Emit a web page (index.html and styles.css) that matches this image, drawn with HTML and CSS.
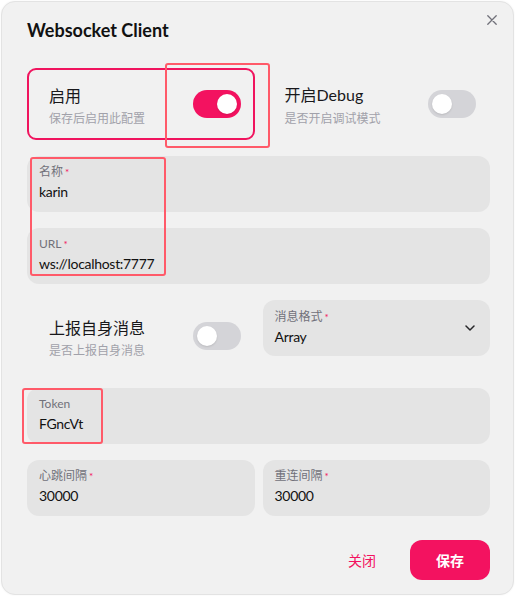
FILE: index.html
```html
<!DOCTYPE html>
<html lang="zh">
<head>
<meta charset="utf-8">
<title>Websocket Client</title>
<link rel="stylesheet" href="styles.css">
</head>
<body>
<div class="dialog">
  <button class="close" aria-label="close">
    <svg width="10" height="10" viewBox="0 0 10 10"><path d="M0.8 0.8 L9.2 9.2 M9.2 0.8 L0.8 9.2" stroke="#71717a" stroke-width="1.3" stroke-linecap="round" fill="none"/></svg>
  </button>
  <h1 class="title">Websocket Client</h1>
  <div class="body">
    <div class="grid2">
      <div class="switch-card selected">
        <div class="sc-text">
          <div class="sc-title">启用</div>
          <div class="sc-desc">保存后启用此配置</div>
        </div>
        <div class="switch on"><span class="knob"></span></div>
      </div>
      <div class="switch-card">
        <div class="sc-text">
          <div class="sc-title">开启<span class="lat">Debug</span></div>
          <div class="sc-desc">是否开启调试模式</div>
        </div>
        <div class="switch"><span class="knob"></span></div>
      </div>
    </div>

    <div class="field">
      <div class="label">名称<span class="req">*</span></div>
      <div class="value">karin</div>
    </div>
    <div class="field">
      <div class="label">URL<span class="req">*</span></div>
      <div class="value">ws://localhost:7777</div>
    </div>

    <div class="grid2 top">
      <div class="switch-card">
        <div class="sc-text">
          <div class="sc-title">上报自身消息</div>
          <div class="sc-desc">是否上报自身消息</div>
        </div>
        <div class="switch"><span class="knob"></span></div>
      </div>
      <div class="field select">
        <div class="sel-text">
          <div class="label">消息格式<span class="req">*</span></div>
          <div class="value">Array</div>
        </div>
        <svg class="chev" width="10" height="6" viewBox="0 0 10 6"><path d="M1 1 L5 5 L9 1" stroke="#27272a" stroke-width="1.5" fill="none" stroke-linecap="round" stroke-linejoin="round"/></svg>
      </div>
    </div>

    <div class="field">
      <div class="label">Token</div>
      <div class="value">FGncVt</div>
    </div>

    <div class="grid2">
      <div class="field">
        <div class="label">心跳间隔<span class="req">*</span></div>
        <div class="value">30000</div>
      </div>
      <div class="field">
        <div class="label">重连间隔<span class="req">*</span></div>
        <div class="value">30000</div>
      </div>
    </div>
  </div>
  <div class="footer">
    <button class="btn ghost">关闭</button>
    <button class="btn primary">保存</button>
  </div>
</div>

<div class="mark mark-switch"></div>
<div class="mark mark-name"></div>
<div class="mark mark-token"></div>
</body>
</html>
```

FILE: styles.css
```css
* { box-sizing: border-box; }
html, body { margin: 0; padding: 0; background: #ffffff; }
body {
  font-family: Lato, "Noto Sans CJK SC", sans-serif;
  color: #18181b;
  width: 516px;
  height: 597px;
  position: relative;
  overflow: hidden;
}
.dialog {
  position: relative;
  margin: 1px 0 0 1px;
  width: 513px;
  height: 594px;
  background: #f1f1f1;
  border: 1px solid #e3e3e3;
  border-radius: 14px;
  padding: 14px 23px 0 25px;
  box-shadow: 0 0 2px rgba(0,0,0,0.06);
}
.close {
  position: absolute;
  top: 8px;
  right: 11px;
  width: 20px;
  height: 20px;
  padding: 0;
  border: 0;
  background: transparent;
  display: flex;
  align-items: center;
  justify-content: center;
}
.title {
  margin: 0;
  font-family: Lato, sans-serif;
  font-size: 18px;
  line-height: 28px;
  font-weight: 700;
  color: #111111;
}
.body {
  margin-top: 24px;
  display: flex;
  flex-direction: column;
  gap: 16px;
}
.grid2 {
  display: grid;
  grid-template-columns: 1fr 1fr;
  gap: 8px;
}
.grid2.top { align-items: start; }
.switch-card {
  height: 72px;
  border: 2px solid transparent;
  border-radius: 9px;
  display: flex;
  align-items: center;
  justify-content: space-between;
  padding: 0 12px 0 20px;
}
.switch-card.selected { border-color: #f0145e; }
.sc-text { padding-top: 1px; }
.sc-title {
  font-family: "Noto Sans CJK SC", sans-serif;
  font-size: 16px;
  line-height: 22px;
  color: #18181b;
}
.sc-title .lat { font-family: Lato, sans-serif; font-size: 16px; }
.sc-desc {
  font-family: "Noto Sans CJK SC", sans-serif;
  margin-top: 4px;
  font-size: 12px;
  line-height: 16px;
  color: #a1a1aa;
}
.switch {
  width: 48px;
  height: 28px;
  border-radius: 14px;
  background: #d4d4d8;
  display: flex;
  align-items: center;
  padding: 0 4px;
}
.switch.on { background: #f31260; justify-content: flex-end; }
.knob {
  width: 20px;
  height: 20px;
  border-radius: 50%;
  background: #ffffff;
  box-shadow: 0 1px 2px rgba(0,0,0,0.12);
}
.field {
  height: 56px;
  border-radius: 12px;
  background: #e4e4e4;
  padding: 8px 12px 0 12px;
}
.label {
  font-family: Lato, "Noto Sans CJK SC", sans-serif;
  font-size: 12px;
  line-height: 16px;
  color: #71717a;
}
.req {
  color: #f31260;
  font-size: 10px;
  margin-left: 2px;
  vertical-align: top;
}
.value {
  margin-top: 2px;
  font-size: 14px;
  line-height: 20px;
  letter-spacing: -0.3px;
  color: #111111;
}
.field.select {
  display: flex;
  align-items: center;
  justify-content: space-between;
  padding: 0 15px 0 12px;
}
.footer {
  margin-top: 24px;
  display: flex;
  justify-content: flex-end;
  gap: 8px;
}
.btn {
  min-width: 80px;
  height: 40px;
  border-radius: 12px;
  border: 0;
  font-family: "Noto Sans CJK SC", sans-serif;
  font-size: 14px;
  padding: 0 16px;
}
.btn.ghost { background: transparent; color: #f31260; }
.btn.primary { background: #f31260; color: #ffffff; font-weight: 700; }
.mark {
  position: absolute;
  border: 2px solid #ff5a69;
  border-radius: 3px;
  pointer-events: none;
}
.mark-switch { left: 165px; top: 63px; width: 105px; height: 85px; }
.mark-name { left: 30px; top: 157px; width: 136px; height: 119px; }
.mark-token { left: 22px; top: 388px; width: 81px; height: 56px; }
```
